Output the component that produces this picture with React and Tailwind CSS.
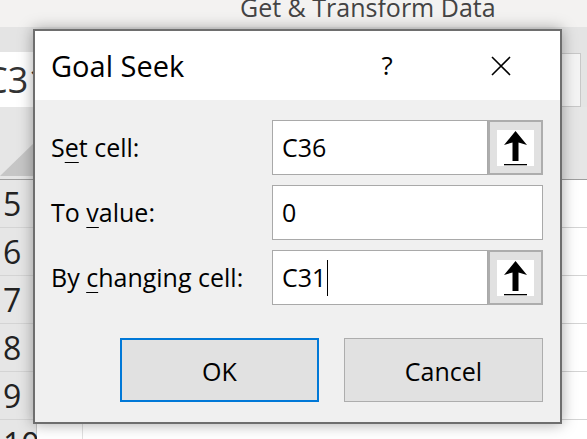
import React from "react";

const font = { fontFamily: '"Open Sans", "Noto Sans", sans-serif' };

function PickButton() {
  return (
    <div className="w-[55px] h-full bg-[#e1e1e1] border-2 border-[#adadad] flex items-center justify-center">
      <div className="w-[37px] h-[36px] bg-white">
        <svg width="37" height="36" viewBox="0 0 37 36">
          <polygon points="18.5,1 30,15 21.5,12.5 21.5,31 15.5,31 15.5,12.5 7,15" fill="black" />
          <rect x="7" y="34" width="23" height="1.3" fill="black" />
        </svg>
      </div>
    </div>
  );
}

function RowNum({ n }) {
  return (
    <div className="h-[48px] flex border-b border-[#d4d4d4]">
      <div className="w-[37px] shrink-0 bg-[#e6e6e6] border-r border-[#c4c4c4] flex items-center pl-[3px] text-[32px] text-[#222]">
        {n}
      </div>
      <div className="w-[46px] shrink-0 border-r border-[#e1e1e1] bg-white" />
      <div className="flex-1 bg-white" />
    </div>
  );
}

export default function App() {
  return (
    <div className="relative w-[587px] h-[439px] overflow-hidden bg-white" style={font}>
      {/* excel behind */}
      <div className="flex flex-col">
        <div className="h-[27px] bg-[#f3f2f1] pl-[240px] overflow-hidden text-[25px] leading-[15px] text-[#444] whitespace-nowrap">
          Get &amp; Transform Data
        </div>
        <div className="h-[80px] bg-[#e4e4e4] flex items-end">
          <div className="w-[200px] h-[55px] bg-white flex items-center overflow-hidden text-[36px] text-[#333]">
            <span className="-ml-[15px]">C31</span>
          </div>
          <div className="flex-1" />
          <div className="w-[21px] h-[54px] bg-[#f4f4f4] border border-[#c8c8c8] mr-[6px]" />
        </div>
        <div className="h-[73px] bg-[#e6e6e6] border-b border-[#9e9e9e] flex">
          <div className="w-[37px] h-full">
            <svg width="37" height="72" viewBox="0 0 37 72">
              <polygon points="36,34 36,69 0,69" fill="#c6c6c6" />
            </svg>
          </div>
        </div>
        {[5, 6, 7, 8, 9, 10].map((n) => (
          <RowNum key={n} n={n} />
        ))}
      </div>

      {/* Goal Seek dialog */}
      <div className="absolute left-[33px] top-[29px] w-[529px] h-[395px] border-2 border-[#6e6e6e] bg-[#f0f0f0] shadow-[0_0_14px_rgba(0,0,0,0.35)] flex flex-col text-black">
        <div className="h-[69px] shrink-0 bg-white flex items-center pl-[16px] pr-[49px]">
          <div className="flex-1 text-[29px]">Goal Seek</div>
          <span className="w-[16px] text-center text-[26px]">?</span>
          <svg className="ml-[96px]" width="20" height="20" viewBox="0 0 20 20">
            <path d="M1 1L19 19M19 1L1 19" stroke="black" strokeWidth="1.6" />
          </svg>
        </div>

        <div className="flex-1 flex flex-col pt-[20px] pl-[16px] pr-[17px] pb-[20px] text-[25px]">
          <div className="grid grid-cols-[221px_1fr] gap-y-[10px] items-center">
            <div>
              S<u className="underline-offset-[5px] decoration-1">e</u>t cell:
            </div>
            <div className="h-[55px] flex">
              <div className="flex-1 bg-white border border-[#a9a9a9] pl-[9px] flex items-center">C36</div>
              <PickButton />
            </div>

            <div>
              To <u className="underline-offset-[5px] decoration-1">v</u>alue:
            </div>
            <div className="h-[55px] flex">
              <div className="flex-1 bg-white border border-[#a9a9a9] pl-[9px] flex items-center">0</div>
            </div>

            <div>
              By <u className="underline-offset-[5px] decoration-1">c</u>hanging cell:
            </div>
            <div className="h-[55px] flex">
              <div className="flex-1 bg-white border border-[#a9a9a9] pl-[9px] flex items-center">
                C31
                <span className="w-[1px] h-[36px] bg-black ml-[1px]" />
              </div>
              <PickButton />
            </div>
          </div>

          <div className="mt-auto flex justify-end gap-[25px]">
            <button className="w-[199px] h-[64px] bg-[#e1e1e1] border-2 border-[#0078d7] pt-[3px]">OK</button>
            <button className="w-[199px] h-[64px] bg-[#e1e1e1] border border-[#adadad] pt-[3px]">Cancel</button>
          </div>
        </div>
      </div>
    </div>
  );
}
